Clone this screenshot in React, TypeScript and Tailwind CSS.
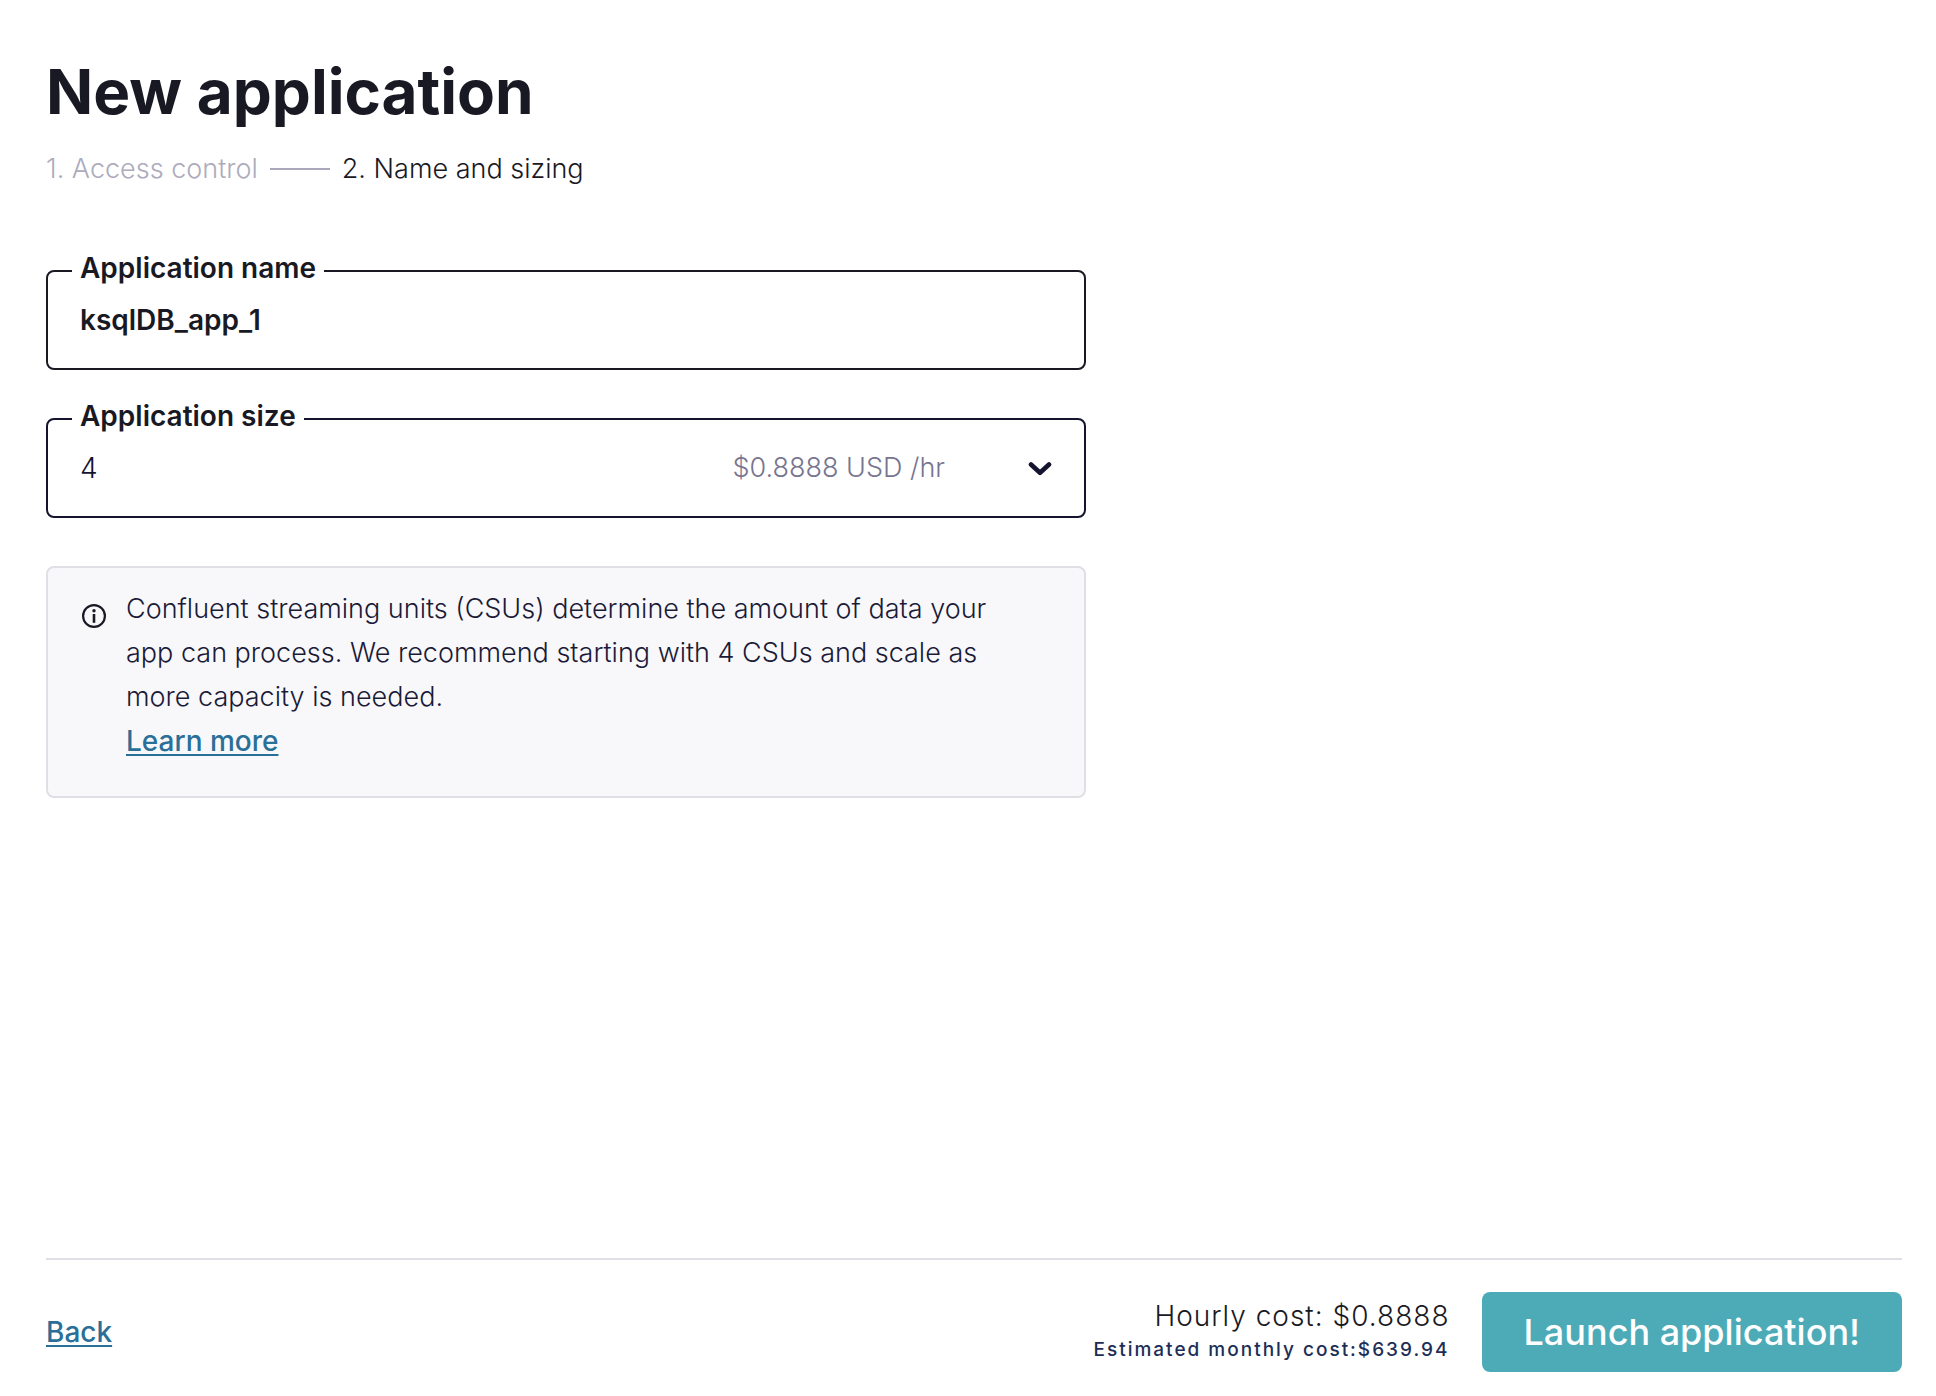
import { useState } from "react";

function Chevron() {
  return (
    <svg viewBox="0 0 24 24" className="pointer-events-none absolute right-8 h-6 w-6" fill="none" stroke="#14142f" strokeWidth="4.6" strokeLinecap="round" strokeLinejoin="round" aria-hidden="true">
      <path d="M3 8.5 12 16.8 21 8.5" />
    </svg>
  );
}

function InfoIcon() {
  return (
    <svg viewBox="0 0 28 28" className="mt-[15px] h-7 w-7 shrink-0" fill="none" stroke="#191924" strokeWidth="2.2" aria-hidden="true">
      <circle cx="14" cy="14" r="10.9" />
      <path d="M14 12V20.8" strokeWidth="2.6" />
      <circle cx="14" cy="8.8" r="1.7" fill="#191924" stroke="none" />
    </svg>
  );
}

const field = "relative flex h-[100px] items-center rounded-lg border-2";
const label = "absolute -top-5 left-6 bg-white px-2 text-[28px] leading-8 font-semibold";
const link = "text-[28px] font-medium text-[#2a6f97] underline decoration-2 underline-offset-[3px]";

export default function App() {
  const [name, setName] = useState("ksqlDB_app_1");
  return (
    <div className="flex min-h-screen flex-col bg-white pr-[34px] pl-[46px] font-['Inter',sans-serif] text-[#191924]">
      <main className="flex-1 pt-[52px]">
        <h1 className="text-[62px] leading-[80px] font-bold">New application</h1>
        <ol className="mt-4 flex items-center gap-3 text-[27px] leading-[42px] font-light">
          <li className="text-[#adabbc]">1. Access control</li>
          <li aria-hidden="true" className="h-0.5 w-[60px] bg-[#a9a7bb]" />
          <li>2. Name and sizing</li>
        </ol>
        <form className="mt-20 max-w-[1040px]">
          <div className={`${field} border-[#191924]`}>
            <label htmlFor="name" className={label}>Application name</label>
            <input id="name" value={name} onChange={(e) => setName(e.target.value)} className="h-full w-full bg-transparent px-8 text-[28px] font-semibold outline-none" />
          </div>
          <div className={`${field} mt-12 border-[#14142f]`}>
            <label htmlFor="size" className={label}>Application size</label>
            <select id="size" className="h-full w-full appearance-none bg-transparent px-8 text-[28px] font-light text-[#14142f] outline-none">
              <option>4</option>
            </select>
            <span className="pointer-events-none absolute right-[139px] text-[27px] font-light text-[#77758f]">$0.8888 USD /hr</span>
            <Chevron />
          </div>
          <section className="mt-12 flex gap-[18px] rounded-lg border-2 border-[#e0dfe6] bg-[#f8f8fb] pt-[19px] pr-16 pb-8 pl-8 text-[27px] leading-[44px] font-light text-[#1b1b38]">
            <InfoIcon />
            <div>
              <p>Confluent streaming units (CSUs) determine the amount of data your app can process. We recommend starting with 4 CSUs and scale as more capacity is needed.</p>
              <a href="#learn" className={link}>Learn more</a>
            </div>
          </section>
        </form>
      </main>
      <footer className="flex items-center border-t-2 border-[#e0dfe6] pt-8 pb-6">
        <a href="#back" className={`${link} mr-auto`}>Back</a>
        <div className="mr-8 text-right">
          <p className="text-[28px] leading-9 font-light tracking-[1px]">Hourly cost: $0.8888</p>
          <p className="text-[19px] leading-8 font-medium tracking-[2px] text-[#1c2e57]">Estimated monthly cost:$639.94</p>
        </div>
        <button type="button" className="h-20 rounded-lg bg-[#4dabb8] px-[42px] text-[36px] font-medium text-white">Launch application!</button>
      </footer>
    </div>
  );
}
